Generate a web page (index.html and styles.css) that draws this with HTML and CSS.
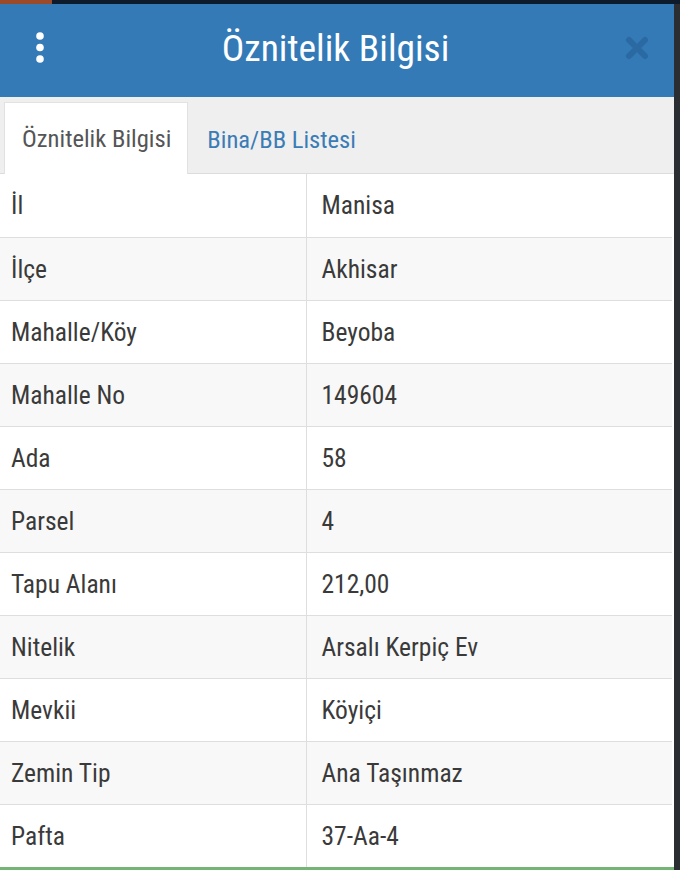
FILE: index.html
```html
<!DOCTYPE html>
<html lang="tr">

<head>
    <meta charset="UTF-8">
    <meta name="viewport" content="width=device-width, initial-scale=1.0">
    <title>Öznitelik Bilgisi</title>
    <link rel="stylesheet" href="styles.css">
</head>

<body>
    <div class="topstrip"><span class="topstrip-tab"></span></div>

    <div class="panel">
        <!-- Header -->
        <div class="panel-header">
            <button class="icon-btn menu-btn" aria-label="Menü">
                <svg width="14" height="34" viewBox="0 0 14 34">
                    <circle cx="7" cy="5" r="3.8" fill="#fff" />
                    <circle cx="7" cy="16.5" r="3.8" fill="#fff" />
                    <circle cx="7" cy="28" r="3.8" fill="#fff" />
                </svg>
            </button>
            <h1 class="panel-title">Öznitelik Bilgisi</h1>
            <button class="icon-btn close-btn" aria-label="Kapat">
                <svg width="26" height="26" viewBox="0 0 26 26">
                    <path d="M5 5 L21 21 M21 5 L5 21" stroke="#2b69a2" stroke-width="6" stroke-linecap="round" />
                </svg>
            </button>
        </div>

        <!-- Tabs -->
        <ul class="tabs">
            <li class="tab active">Öznitelik Bilgisi</li>
            <li class="tab">Bina/BB Listesi</li>
        </ul>

        <table class="attr-table">
            <tr><td>İl</td><td>Manisa</td></tr>
            <tr><td>İlçe</td><td>Akhisar</td></tr>
            <tr><td>Mahalle/Köy</td><td>Beyoba</td></tr>
            <tr><td>Mahalle No</td><td>149604</td></tr>
            <tr><td>Ada</td><td>58</td></tr>
            <tr><td>Parsel</td><td>4</td></tr>
            <tr><td>Tapu Alanı</td><td>212,00</td></tr>
            <tr><td>Nitelik</td><td>Arsalı Kerpiç Ev</td></tr>
            <tr><td>Mevkii</td><td>Köyiçi</td></tr>
            <tr><td>Zemin Tip</td><td>Ana Taşınmaz</td></tr>
            <tr><td>Pafta</td><td>37-Aa-4</td></tr>
        </table>
    </div>

    <div class="footer-line"></div>
</body>

</html>
```

FILE: styles.css
```css
* {
    box-sizing: border-box;
}

body {
    margin: 0;
    padding: 0;
    background-color: #2a2d31;
    font-family: Roboto, "Noto Sans", Arial, sans-serif;
    font-stretch: condensed;
    color: #333;
    overflow: hidden;
}

/* thin strip of the page behind the dialog */
.topstrip {
    height: 4px;
    background-color: #0d1b2c;
}

.topstrip-tab {
    display: block;
    width: 52px;
    height: 4px;
    background-color: #9b4a2a;
}

.panel {
    width: 674px;
    background-color: #fff;
}

/* Header */
.panel-header {
    height: 93px;
    background-color: #337ab7;
    display: flex;
    align-items: center;
    justify-content: space-between;
    padding: 0 24px 5px 33px;
}

.icon-btn {
    background: none;
    border: none;
    padding: 0;
    display: flex;
    align-items: center;
    justify-content: center;
}

.menu-btn {
    width: 14px;
}

.close-btn {
    width: 26px;
}

.panel-title {
    margin: 0;
    color: #fff;
    font-size: 37.5px;
    font-weight: 400;
}

/* Tabs */
.tabs {
    list-style: none;
    margin: 0;
    padding: 6px 0 0 4px;
    height: 77px;
    background-color: #efefef;
    border-bottom: 1px solid #dcdcdc;
    display: flex;
    align-items: flex-end;
}

.tab {
    height: 71px;
    padding: 0 16px 0 17px;
    display: flex;
    align-items: center;
    font-size: 24.6px;
    color: #3b7cb6;
    margin-bottom: -1px;
    border: 1px solid transparent;
    border-bottom: none;
}

.tab.active {
    background-color: #fff;
    color: #555;
    border-color: #e2e2e2;
    height: 72px;
    margin-right: 1px;
}

/* Attribute table */
.attr-table {
    width: 672px;
    border-collapse: collapse;
    font-size: 25.5px;
}

.attr-table td {
    height: 63px;
    padding: 0 11px;
    border-top: 1px solid #dedede;
    vertical-align: middle;
    color: #3a3a3a;
}

.attr-table tr:first-child td {
    border-top: none;
}

.attr-table td:first-child {
    width: 306px;
    border-right: 1px solid #dedede;
}

.attr-table td:last-child {
    padding-left: 15px;
}

.attr-table tr:nth-child(even) td {
    background-color: #f8f8f8;
}

.footer-line {
    width: 674px;
    height: 4px;
    background-color: #74b474;
}
```
